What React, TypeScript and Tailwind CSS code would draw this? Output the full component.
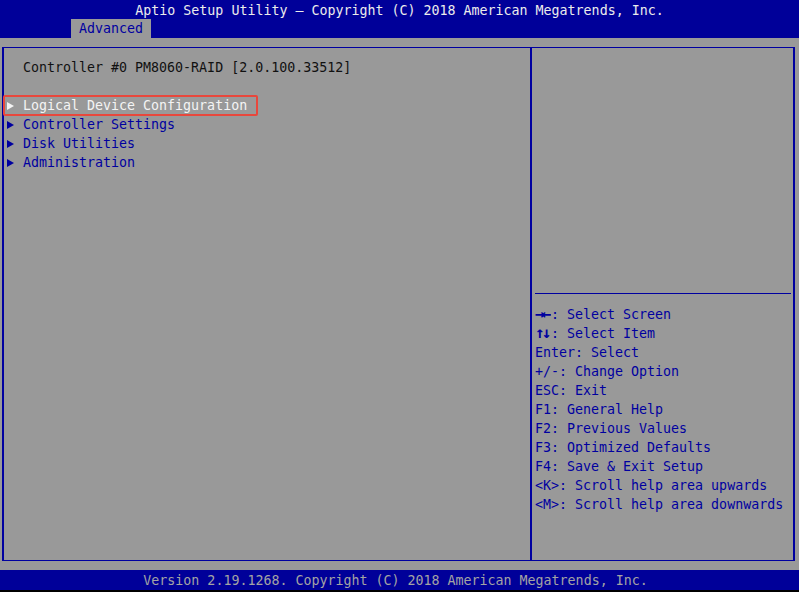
const items = ["Logical Device Configuration", "Controller Settings", "Disk Utilities", "Administration"]

const helpLines = [
  ["→←", ": Select Screen"],
  ["↑↓", ": Select Item"],
  ["", "Enter: Select"],
  ["", "+/-: Change Option"],
  ["", "ESC: Exit"],
  ["", "F1: General Help"],
  ["", "F2: Previous Values"],
  ["", "F3: Optimized Defaults"],
  ["", "F4: Save & Exit Setup"],
  ["", "<K>: Scroll help area upwards"],
  ["", "<M>: Scroll help area downwards"],
]

function Arrow({ selected }: { selected: boolean }) {
  return (
    <svg width="8" height="10" viewBox="0 0 8 10" className="mr-[8px] ml-[3px]">
      <path d="M0 1 L7 5 L0 9 Z" fill={selected ? "#f4f4f4" : "#0000a0"} />
    </svg>
  )
}

export default function App() {
  return (
    <div
      className="w-[799px] h-[592px] flex flex-col bg-[#999999] overflow-hidden text-[13.3px] leading-[19px] whitespace-pre"
      style={{ fontFamily: '"DejaVu Sans Mono", "Liberation Mono", monospace' }}
    >
      {/* header */}
      <div className="h-[38px] bg-[#000099] flex flex-col">
        <div className="h-[19px] pt-px flex justify-center text-[#ececec]">
          Aptio Setup Utility – Copyright (C) 2018 American Megatrends, Inc.
        </div>
        <div className="h-[19px] flex">
          <div className="ml-[71px] w-[80px] bg-[#999999] text-[#0000a0] flex justify-center">Advanced</div>
        </div>
      </div>

      {/* main box */}
      <div className="mt-[9px] ml-[2px] w-[793px] h-[514px] border-x-2 border-y border-[#0000a0] flex">
        <div className="w-[526px] pt-[10px] text-[#0000a0]">
          <div className="h-[19px] pl-[19px] text-[#111111]">Controller #0 PM8060-RAID [2.0.100.33512]</div>
          <div className="h-[19px]" />
          {items.map((item, i) => (
            <div key={item} className="relative h-[19px] flex items-center">
              {i === 0 && (
                <div className="absolute left-[-1px] top-[-1px] w-[255px] h-[21px] border-2 border-[#e8473c] rounded-[2px]" />
              )}
              <Arrow selected={i === 0} />
              <span className={i === 0 ? "text-[#f4f4f4]" : ""}>{item}</span>
            </div>
          ))}
        </div>
        <div className="w-[2px] bg-[#0000a0]" />
        <div className="flex-1 flex flex-col text-[#0000a0]">
          <div className="h-[245px]" />
          <div className="h-px ml-[3px] mr-[2px] bg-[#0000a0]" />
          <div className="pt-[11px] pl-[3px]">
            {helpLines.map(([key, rest]) => (
              <div key={rest} className="h-[19px] flex">
                {key && (
                  <span className="font-bold text-[16px] tracking-[-3px] w-[16px] overflow-hidden leading-[18px]">
                    {key}
                  </span>
                )}
                <span>{rest}</span>
              </div>
            ))}
          </div>
        </div>
      </div>

      {/* footer */}
      <div className="mt-[9px] h-[20px] pr-[8px] bg-[#000099] flex justify-center items-center text-[#a4a4a4]">
        Version 2.19.1268. Copyright (C) 2018 American Megatrends, Inc.
      </div>
      <div className="flex-1 bg-black" />
    </div>
  )
}
